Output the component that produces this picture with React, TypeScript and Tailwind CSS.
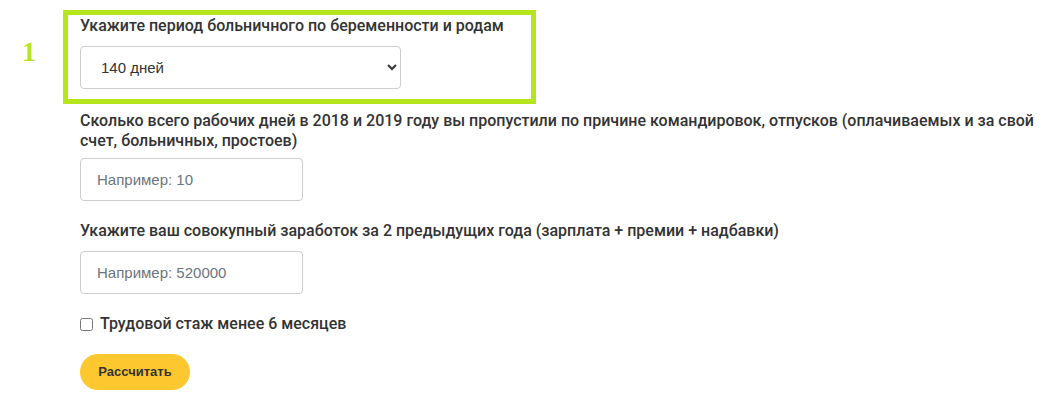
import React from 'react'

const label = "block text-[16px] leading-5 font-medium text-[#333]"
const field =
  "h-[43px] border border-[#ccc] rounded-[4px] bg-white px-4 text-[15px] text-[#333] font-['Liberation_Sans',Arial,sans-serif] placeholder:text-[#6c757d] outline-none"

export default function App() {
  return (
    <div className="flex w-[1043px] h-[413px] bg-white pt-[10px] font-['Roboto',sans-serif] text-[#333]">
      {/* step marker */}
      <div className="w-[63px] shrink-0 pl-[22px] pt-[28px]">
        <span className="block text-[28px] leading-7 font-bold text-[#b5e51d] font-['Liberation_Serif','Times_New_Roman',serif]">
          1
        </span>
      </div>

      <div className="flex flex-col">
        <div className="w-[473px] border-[5px] border-[#b5e51d] pl-3 pt-px pb-[10px]">
          <label className={label}>Укажите период больничного по беременности и родам</label>
          <select defaultValue="140" className={`${field} mt-[10px] w-[321px] pl-4`}>
            <option value="140">140 дней</option>
            <option value="156">156 дней</option>
            <option value="194">194 дня</option>
          </select>
        </div>

        <div className="ml-[17px] w-[960px] flex flex-col items-start">
          <label className={`${label} mt-[7px]`}>
            Сколько всего рабочих дней в 2018 и 2019 году вы пропустили по причине командировок, отпусков
            (оплачиваемых и за свой счет, больничных, простоев)
          </label>
          <input type="text" placeholder="Например: 10" className={`${field} mt-[7px] w-[223px]`} />

          <label className={`${label} mt-5`}>
            Укажите ваш совокупный заработок за 2 предыдущих года (зарплата + премии + надбавки)
          </label>
          <input type="text" placeholder="Например: 520000" className={`${field} mt-[10px] w-[223px]`} />

          <label className="mt-5 flex items-center gap-[7px] text-[16px] leading-5 font-medium text-[#333]">
            <input type="checkbox" className="m-0 w-[13px] h-[13px]" />
            Трудовой стаж менее 6 месяцев
          </label>

          <button className="mt-5 h-9 w-[110px] rounded-full bg-[#fdc82f] text-[13px] font-bold text-[#333] font-['Liberation_Sans',Arial,sans-serif]">
            Рассчитать
          </button>
        </div>
      </div>
    </div>
  )
}
